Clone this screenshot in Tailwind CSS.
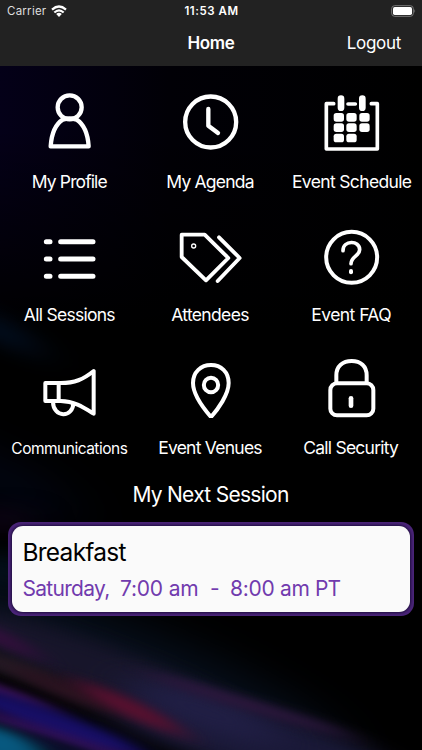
<!DOCTYPE html>
<html lang="en">
<head>
<meta charset="utf-8">
<title>Home</title>
<script src="https://cdn.jsdelivr.net/npm/@tailwindcss/browser@4"></script>
</head>
<body class="bg-black">
<div class="relative isolate flex h-[750px] w-[422px] flex-col overflow-hidden bg-black font-[Inter,'Liberation_Sans',sans-serif] text-white">

  <!-- Light-streak wallpaper -->
  <svg class="absolute inset-0 -z-10" width="422" height="750" viewBox="0 0 422 750" fill="none">
    <defs>
      <filter id="b4" filterUnits="userSpaceOnUse" x="-300" y="-300" width="1100" height="1400" color-interpolation-filters="sRGB"><feGaussianBlur stdDeviation="18 5"/></filter>
      <filter id="b8" filterUnits="userSpaceOnUse" x="-300" y="-300" width="1100" height="1400" color-interpolation-filters="sRGB"><feGaussianBlur stdDeviation="24 9"/></filter>
      <filter id="b20" filterUnits="userSpaceOnUse" x="-300" y="-300" width="1100" height="1400" color-interpolation-filters="sRGB"><feGaussianBlur stdDeviation="30 20"/></filter>
      <linearGradient id="top" x1="0" y1="0" x2="1" y2="0"><stop offset="0" stop-color="#040018"/><stop offset=".4" stop-color="#010006"/><stop offset="1" stop-color="#000"/></linearGradient>
      <linearGradient id="fade" x1="0" y1="0" x2="0" y2="1"><stop offset="0" stop-color="#000" stop-opacity="0"/><stop offset="1" stop-color="#000"/></linearGradient>
    </defs>
    <rect y="66" width="422" height="264" fill="url(#top)"/>
    <rect y="130" width="422" height="200" fill="url(#fade)"/>
    <ellipse cx="0" cy="331" rx="45" ry="12" transform="rotate(25 0 331)" fill="#020e20" filter="url(#b8)"/>
    <ellipse cx="0" cy="480" rx="90" ry="20" transform="rotate(25 0 480)" fill="#020614" filter="url(#b20)"/>
    <ellipse cx="0" cy="520" rx="20" ry="14" fill="#12041c" filter="url(#b8)"/>
    <ellipse cx="0" cy="572" rx="18" ry="20" fill="#031a2c" filter="url(#b8)"/>
    <ellipse cx="130" cy="665" rx="230" ry="40" transform="rotate(22 130 665)" fill="#060e1a" filter="url(#b20)"/>
    <ellipse cx="90" cy="665" rx="160" ry="24" transform="rotate(20 90 665)" fill="#17152a" filter="url(#b8)"/>
    <ellipse cx="250" cy="740" rx="150" ry="30" transform="rotate(14 250 740)" fill="#191836" filter="url(#b8)"/>
    <ellipse cx="0" cy="638" rx="45" ry="8" transform="rotate(25 0 638)" fill="#300f3a" filter="url(#b4)"/>
    <ellipse cx="0" cy="663" rx="60" ry="9" transform="rotate(18 0 663)" fill="#231a24" filter="url(#b4)"/>
    <ellipse cx="205" cy="712" rx="80" ry="18" transform="rotate(20 205 712)" fill="#201e44" filter="url(#b8)"/>
    <ellipse cx="250" cy="705" rx="110" ry="5" transform="rotate(17 250 705)" fill="#2f173e" filter="url(#b4)"/>
    <ellipse cx="65" cy="690" rx="60" ry="9" transform="rotate(22 65 690)" fill="#29121f" filter="url(#b4)"/>
    <ellipse cx="130" cy="708" rx="58" ry="9" transform="rotate(25 130 708)" fill="#56102e" filter="url(#b4)"/>
    <ellipse cx="0" cy="691" rx="65" ry="5" transform="rotate(20 0 691)" fill="#4a1565" filter="url(#b4)"/>
    <ellipse cx="52" cy="722" rx="105" ry="12" transform="rotate(20 52 722)" fill="#160e64" filter="url(#b4)"/>
    <ellipse cx="60" cy="738" rx="120" ry="5" transform="rotate(18 60 738)" fill="#3a1265" filter="url(#b4)"/>
    <ellipse cx="65" cy="750" rx="60" ry="7" transform="rotate(18 65 750)" fill="#0b0d2c" filter="url(#b4)"/>
    <ellipse cx="0" cy="744" rx="50" ry="16" transform="rotate(20 0 744)" fill="#07587f" filter="url(#b4)"/>
  </svg>

  <header class="h-[66px] bg-[#222222]">
    <div class="grid h-[22px] grid-cols-3 items-center pl-[7px] pr-[6px] text-[11.5px] leading-none">
      <div class="flex items-center gap-[5px]">
        <span class="relative top-px tracking-[0.25px] text-[#dedede]">Carrier</span>
        <svg class="h-3 w-4" viewBox="0 0 48 36" fill="none" stroke="#fff" stroke-width="6.500">
          <path d="M3 14Q24-5 45 14"/><path d="M10 22.500Q24 9.500 38 22.500"/><path d="M24 36L15.500 27Q24 20 32.500 27Z" fill="#fff" stroke="none"/>
        </svg>
      </div>
      <div class="relative top-px text-center font-semibold tracking-[0.55px]">11:53 AM</div>
      <svg class="h-3 w-[25px] justify-self-end" viewBox="0 0 75 36" fill="none">
        <rect x="2" y="2" width="65" height="32" rx="9" stroke="#777" stroke-width="3"/>
        <rect x="6" y="6" width="57" height="24" rx="5" fill="#fff"/>
        <path d="M70 12Q75 18 70 24Z" fill="#777"/>
      </svg>
    </div>
    <div class="grid h-[43px] grid-cols-3 items-center px-[21px] text-[17px]">
      <span></span>
      <h1 class="text-center font-semibold tracking-[-0.35px]">Home</h1>
      <span class="text-right tracking-[-0.3px]">Logout</span>
    </div>
  </header>

  <nav class="box-content grid h-[399px] grid-cols-3 grid-rows-3 pt-[26px] text-[17.5px] leading-6 whitespace-nowrap">
    <a class="flex flex-col items-center gap-[18px]">
      <svg class="size-15" viewBox="121 36 180 180" fill="none" stroke="#fff" stroke-width="13" stroke-linejoin="round">
        <circle cx="210" cy="82" r="36"/><path d="M189 119Q157 140 153 199H267Q263 140 231 119Q210 112 189 119Z"/>
      </svg>
      <span class="pr-0.5 tracking-[-0.88px]">My Profile</span>
    </a>
    <a class="flex flex-col items-center gap-[18px]">
      <svg class="size-15" viewBox="120 36 180 180" fill="none" stroke="#fff" stroke-width="13" stroke-linecap="round" stroke-linejoin="round">
        <circle cx="209" cy="126" r="76.500"/><path d="M202 87V137L231 159"/>
      </svg>
      <span class="pr-0.5 tracking-[-0.8px]">My Agenda</span>
    </a>
    <a class="flex flex-col items-center gap-[18px]">
      <svg class="size-15" viewBox="119 36 180 180" fill="none" stroke="#fff" stroke-width="11" stroke-linecap="round" stroke-linejoin="round">
        <path d="M154 71H132V207H285V71H267M197 72H219"/>
        <path d="M176 56V83M240 56V83" stroke-width="20"/>
        <g fill="#fff" stroke="none">
          <rect x="154" y="99" width="31" height="26" rx="8"/><rect x="192" y="99" width="31" height="26" rx="8"/><rect x="231" y="99" width="31" height="26" rx="8"/>
          <rect x="154" y="130" width="31" height="26" rx="8"/><rect x="192" y="130" width="31" height="26" rx="8"/><rect x="231" y="130" width="31" height="26" rx="8"/>
          <rect x="154" y="161" width="31" height="26" rx="8"/><rect x="192" y="161" width="31" height="26" rx="8"/>
        </g>
      </svg>
      <span class="tracking-[-0.65px]">Event Schedule</span>
    </a>
    <a class="flex flex-col items-center gap-[18px]">
      <svg class="size-15" viewBox="121 30 180 180" fill="none" stroke="#fff" stroke-width="15" stroke-linecap="round">
        <path d="M140 80H151M183 80H280M140 132H151M183 132H280M140 184H151M183 184H280"/>
      </svg>
      <span class="pr-0.5 tracking-[-0.72px]">All Sessions</span>
    </a>
    <a class="flex flex-col items-center gap-[18px]">
      <svg class="size-15 overflow-visible" viewBox="120 30 180 180" fill="none" stroke="#fff" stroke-width="11.500" stroke-linecap="round" stroke-linejoin="round">
        <path d="M122 59H191L262 129L195 196L122 126Z"/><path d="M234 67L296 129L230 198"/><circle cx="158" cy="93" r="6" stroke-width="4"/>
      </svg>
      <span class="pr-0.5 tracking-[-0.65px]">Attendees</span>
    </a>
    <a class="flex flex-col items-center gap-[18px]">
      <svg class="size-15" viewBox="119 30 180 180" fill="none" stroke="#fff" stroke-width="12" stroke-linecap="round">
        <circle cx="208" cy="127" r="76.500"/><path d="M182 107C182 75 232 75 232 104C232 123 206 124 206 146" stroke-width="11"/><path d="M206 168V172" stroke-width="12"/>
      </svg>
      <span class="pr-px tracking-[-0.55px]">Event FAQ</span>
    </a>
    <a class="flex flex-col items-center gap-[18px]">
      <svg class="size-15" viewBox="121 39 180 180" fill="none" stroke="#fff" stroke-width="12" stroke-linejoin="round">
        <path d="M137 114H183C225 114 250 104 282 78V206C250 186 225 169 183 168H137Z"/><path d="M177 114V168"/><path d="M160 170C160 219 221 220 221 173"/>
      </svg>
      <span class="pt-px pr-0.5 text-[15.5px] tracking-[-0.5px]">Communications</span>
    </a>
    <a class="flex flex-col items-center gap-[18px]">
      <svg class="size-15" viewBox="120 39 180 180" fill="none" stroke="#fff" stroke-width="12" stroke-linejoin="round">
        <path d="M210 216C190 193 156 148 156 114C156 81 180 60 210 60S263 81 263 114C263 148 231 193 210 216Z"/><circle cx="210" cy="120" r="21.500"/>
      </svg>
      <span class="pr-0.5 tracking-[-0.75px]">Event Venues</span>
    </a>
    <a class="flex flex-col items-center gap-[18px]">
      <svg class="size-15" viewBox="119 39 180 180" fill="none" stroke="#fff" stroke-width="12" stroke-linecap="round">
        <rect x="144" y="115" width="129" height="96" rx="20"/><path d="M162 112V91C162 64 181 48 208 48S253 64 253 91V112"/><path d="M206 160V182" stroke-width="14"/>
      </svg>
      <span class="pr-0.5 tracking-[-0.75px]">Call Security</span>
    </a>
  </nav>

  <h2 class="-mt-[10px] pr-px text-center text-[21px] leading-7 tracking-[-0.72px]">My Next Session</h2>

  <section class="mx-2 mt-[13px] h-[94px] rounded-[13px] bg-[#4b2579] p-1">
    <div class="h-full rounded-[11px] bg-[#fafafa] pl-[10.500px] whitespace-nowrap shadow-[0_0_3px_1px_#1b0b3a]">
      <div class="pt-[10px] text-[24.5px] leading-8 tracking-[-0.75px] text-black">Breakfast</div>
      <div class="flex pt-[7px] text-[21px] leading-7 text-[#713bae]">
        <span class="w-[97.5px] tracking-[-0.7px]">Saturday,</span><span class="w-[90px] tracking-[-0.2px]">7:00 am</span><span class="w-5">-</span><span class="w-[85px] tracking-[-0.3px]">8:00 am</span><span class="tracking-[-0.8px]">PT</span>
      </div>
    </div>
  </section>
</div>
</body>
</html>
